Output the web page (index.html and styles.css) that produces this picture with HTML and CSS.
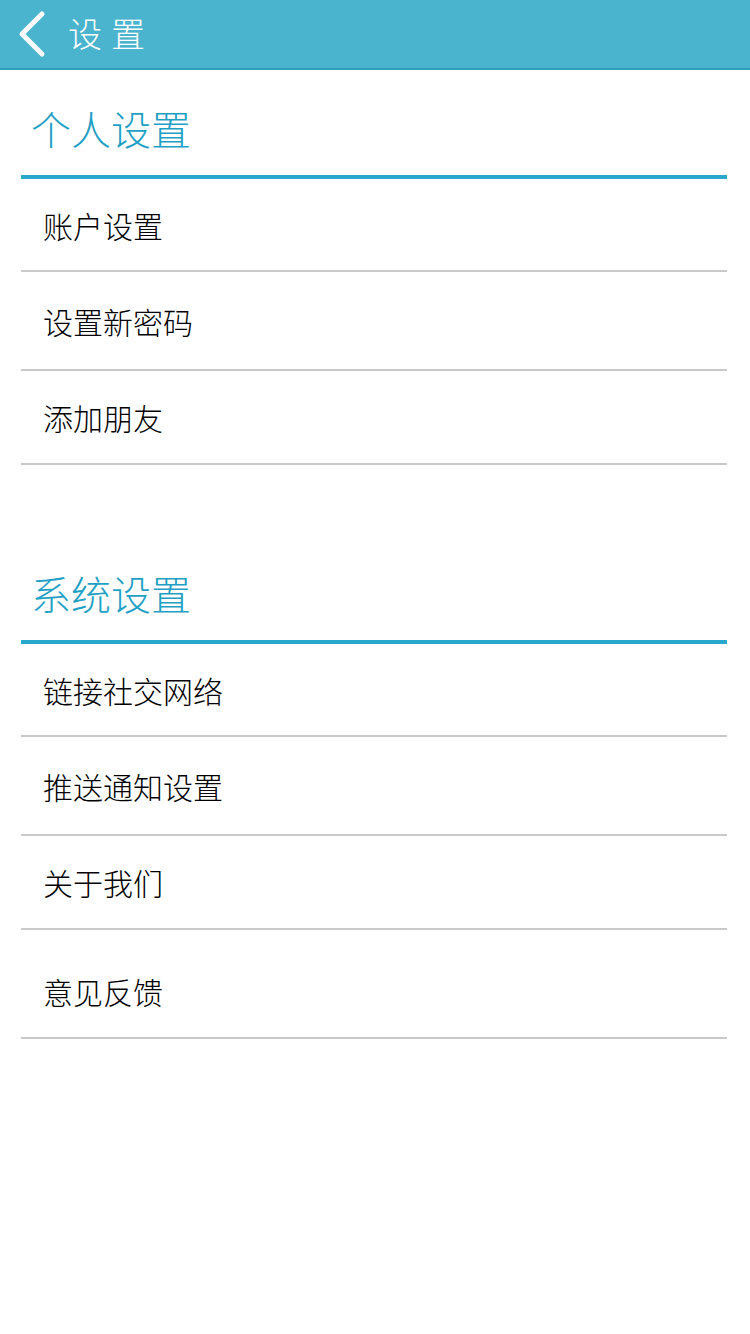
FILE: index.html
```html
<html lang="zh-CN">
<head>
    <meta charset="UTF-8">
    <meta name="viewport" content="width=device-width, initial-scale=1.0">
    <title>设置</title>
    <link rel="stylesheet" href="styles.css">
</head>
<body>
    <header class="topbar">
        <a href="#" class="back">
            <svg width="30" height="48" viewBox="0 0 30 48"><path d="M26 4 L6 24 L26 44" fill="none" stroke="#fff" stroke-width="5" stroke-linecap="round" stroke-linejoin="round"/></svg>
        </a>
        <h1>设置</h1>
    </header>

    <div class="section">
        <h2 class="section-title">个人设置</h2>
        <div class="list">
            <a href="#" class="row r1">账户设置</a>
            <a href="#" class="row r2">设置新密码</a>
            <a href="#" class="row r3">添加朋友</a>
        </div>
    </div>

    <div class="section second">
        <h2 class="section-title">系统设置</h2>
        <div class="list">
            <a href="#" class="row r1">链接社交网络</a>
            <a href="#" class="row r2">推送通知设置</a>
            <a href="#" class="row r3">关于我们</a>
            <a href="#" class="row r4">意见反馈</a>
        </div>
    </div>
</body>
</html>
```

FILE: styles.css
```css
body { margin: 0; padding: 0; background-color: #fff; font-family: "Noto Sans CJK SC", "Noto Sans", sans-serif; color: #111; }
.topbar { height: 68px; background-color: #4ab3cd; border-bottom: 2px solid #2f9fbe; display: flex; align-items: center; padding-left: 16px; }
.back { display: flex; align-items: center; width: 52px; height: 68px; }
.topbar h1 { margin: 0; font-size: 34px; font-weight: 300; color: #fff; letter-spacing: 9px; line-height: 1; margin-top: -2px; }
.section { padding: 0 23px 0 21px; }
.section.second { margin-top: 70px; }
.section-title { margin: 0; height: 109px; box-sizing: border-box; padding: 32px 0 0 10px; font-size: 40px; font-weight: 300; line-height: 52px; color: #1fa0c5; border-bottom: 4px solid #2aa8cb; }
.list { display: flex; flex-direction: column; }
.row { display: flex; align-items: center; padding-left: 22px; font-size: 30px; font-weight: 300; color: #000; text-decoration: none; border-bottom: 2px solid #c9c9c9; box-sizing: border-box; }
.r1 { height: 93px; }
.r2 { height: 99px; }
.r3 { height: 94px; }
.r4 { height: 109px; padding-top: 14px; }
```
